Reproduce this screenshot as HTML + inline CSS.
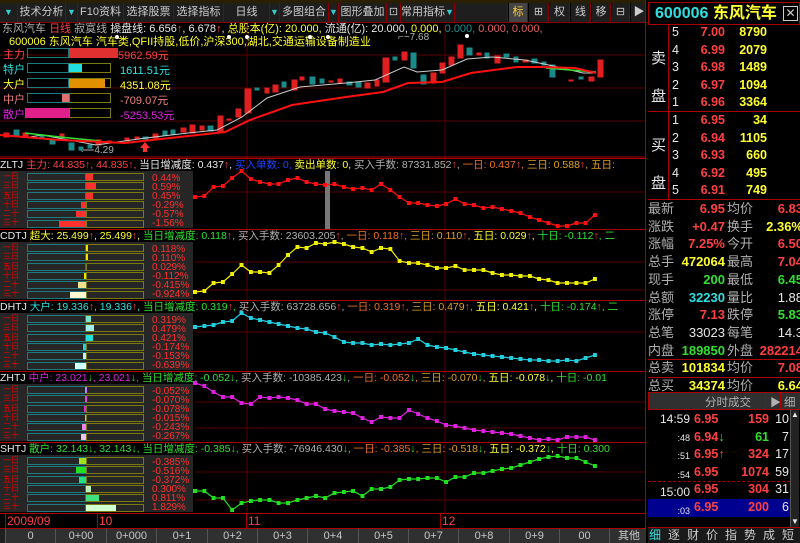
<!DOCTYPE html>
<html><head><meta charset="utf-8"><style>
*{margin:0;padding:0;box-sizing:border-box}
body{width:800px;height:543px;background:#000;overflow:hidden;position:relative;font-family:"Liberation Sans","Noto Sans CJK SC",sans-serif;font-size:11px;color:#c0c0c0}
.a{position:absolute;white-space:nowrap}
.tb{position:absolute;top:3px;height:19px;background:#1e1e1e;border-right:1px solid #800;color:#ccc;font-size:11px;line-height:19px;text-align:center;overflow:hidden;white-space:nowrap}
.tri{color:#3cc;font-size:9px}
.hd{position:absolute;left:0;width:645px;height:12px;line-height:12px;font-size:10.5px;border-top:1px solid #a00;white-space:nowrap;overflow:hidden}
.mini{position:absolute;left:0;width:193px;height:57px;background:#262626}
.bl{position:absolute;left:27px;width:59px;height:8px;border:1px solid #1d7b80}
.br{position:absolute;left:86px;width:58px;height:8px;border:1px solid #7a7a10}
.pc{position:absolute;left:152px;color:#ff3030;font-size:10px;line-height:9px}
.lab{position:absolute;left:3px;width:22px;color:#e00;font-size:8px;line-height:9.3px}
.r{color:#ff4040}.y{color:#ffff30}.g{color:#30e030}.c{color:#30e0e0}.w{color:#e8e8e8}.o{color:#f07020}.gr{color:#b0b0b0}.m{color:#e020e0}
.ob{position:absolute;font-size:12.5px;line-height:17.5px;font-weight:bold}
.st{position:absolute;font-size:13px;line-height:17.7px}
.bt{position:absolute;top:529px;height:14px;background:#303030;border-left:1px solid #555;color:#c8c8c8;font-size:11px;line-height:14px;text-align:center}
</style></head><body>

<!-- toolbar -->
<div class="a" style="left:0;top:0;width:645px;height:3px;background:#2a2000"></div>
<div class="a" style="left:0;top:0;width:645px;height:23px;border-bottom:1px solid #800"></div>
<div class="tb" style="left:0;width:18px"><span class="tri">▼</span></div>
<div class="tb" style="left:18px;width:48px">技术分析</div>
<div class="tb" style="left:66px;width:12px"><span class="tri">▼</span></div>
<div class="tb" style="left:78px;width:46px">F10资料</div>
<div class="tb" style="left:124px;width:50px">选择股票</div>
<div class="tb" style="left:174px;width:50px">选择指标</div>
<div class="tb" style="left:224px;width:46px">日线</div>
<div class="tb" style="left:270px;width:10px"><span class="tri">▼</span></div>
<div class="tb" style="left:280px;width:49px">多图组合</div>
<div class="tb" style="left:329px;width:10px"><span class="tri">▼</span></div>
<div class="tb" style="left:339px;width:48px">图形叠加</div>
<div class="tb" style="left:387px;width:14px">⊡</div>
<div class="tb" style="left:401px;width:54px">常用指标<span class="tri">▼</span></div>
<div class="tb" style="left:455px;width:53px"></div>
<div class="tb" style="left:509px;width:19px;background:#444;color:#ffcc40">标</div>
<div class="tb" style="left:529px;width:20px">⊞</div>
<div class="tb" style="left:550px;width:20px">权</div>
<div class="tb" style="left:571px;width:20px">线</div>
<div class="tb" style="left:592px;width:19px">移</div>
<div class="tb" style="left:612px;width:18px">⊟</div>
<div class="tb" style="left:631px;width:17px">▶</div>

<!-- main chart text -->
<div class="a" style="left:2px;top:23px;font-size:11px;line-height:12px"><span class="gr">东风汽车 </span><span class="r">日线</span><span class="gr"> 寂寞线 </span><span class="w"> 操盘线: 6.656<span class="r">↑</span>, 6.678<span class="r">↑</span>, </span><span class="y">总股本(亿): 20.000, </span><span class="w">流通(亿): 20.000, </span><span class="y">0.000, </span><span style="color:#1a9090">0.000, </span><span style="color:#e06060">0.000, 0.000,</span></div>
<div class="a y" style="left:9px;top:36px;font-size:11px;line-height:12px">600006 东风汽车 汽车类,QFII持股,低价,沪深300,湖北,交通运输设备制造业</div>
<div class="a gr" style="left:398px;top:32px;font-size:10px">⌐~7.68</div>
<div class="a gr" style="left:80px;top:145px;font-size:10px">⟵4.29</div>

<svg class="a" style="left:0;top:0" width="645" height="528">
<defs><marker id="d" markerWidth="4" markerHeight="4" refX="2" refY="2" markerUnits="userSpaceOnUse"><rect width="4" height="4" fill="context-stroke"/></marker></defs>
<g stroke="#5a0000" stroke-width="1">
<line x1="247" y1="24" x2="247" y2="514"/><line x1="445" y1="24" x2="445" y2="514"/>
<line x1="0" y1="55" x2="645" y2="55"/><line x1="0" y1="88" x2="645" y2="88"/><line x1="0" y1="121" x2="645" y2="121"/>
<line x1="195" y1="192" x2="645" y2="192"/><line x1="195" y1="262" x2="645" y2="262"/><line x1="195" y1="290" x2="645" y2="290"/>
<line x1="195" y1="332" x2="645" y2="332"/><line x1="195" y1="402" x2="645" y2="402"/><line x1="195" y1="428" x2="645" y2="428"/>
<line x1="195" y1="472" x2="645" y2="472"/><line x1="195" y1="500" x2="645" y2="500"/>
</g>
<line x1="0" y1="157" x2="645" y2="157" stroke="#a00"/>
<rect x="325" y="171" width="5" height="59" fill="#777"/>
<g fill="#e02020" stroke="#e02020">
<rect x="4" y="133" width="5" height="4"/><rect x="23" y="133" width="5" height="3"/><rect x="60" y="134" width="4" height="2"/><rect x="96" y="140" width="5" height="5"/><rect x="107" y="141" width="4" height="2"/><rect x="125" y="138" width="4" height="3"/><rect x="135" y="137" width="4" height="2"/><rect x="153" y="134" width="5" height="4"/><rect x="181" y="128" width="5" height="4"/><rect x="190" y="125" width="5" height="8"/><rect x="200" y="126" width="4" height="4"/><rect x="218" y="116" width="5" height="16"/><rect x="227" y="119" width="4" height="1"/><rect x="236" y="109" width="5" height="8"/><rect x="245" y="89" width="6" height="24"/><rect x="265" y="88" width="4" height="5"/><rect x="273" y="85" width="5" height="7"/><rect x="292" y="80" width="5" height="10"/><rect x="300" y="77" width="4" height="3"/><rect x="329" y="81" width="4" height="1"/><rect x="338" y="79" width="4" height="4"/><rect x="365" y="83" width="5" height="5"/><rect x="375" y="80" width="4" height="6"/><rect x="383" y="58" width="6" height="24"/><rect x="402" y="52" width="5" height="8"/><rect x="431" y="73" width="5" height="10"/><rect x="440" y="63" width="5" height="10"/><rect x="449" y="57" width="5" height="8"/><rect x="458" y="45" width="5" height="13"/><rect x="477" y="53" width="4" height="2"/><rect x="495" y="56" width="5" height="7"/><rect x="523" y="60" width="5" height="2"/><rect x="569" y="80" width="4" height="1"/><rect x="589" y="77" width="5" height="4"/><rect x="598" y="60" width="5" height="17"/>
</g>
<g fill="#1a8a8a" stroke="#1a8a8a">
<rect x="14" y="130" width="5" height="6"/><rect x="40" y="135" width="4" height="4"/><rect x="50" y="140" width="5" height="4"/><rect x="69" y="143" width="5" height="7"/><rect x="79" y="147" width="4" height="3"/><rect x="88" y="145" width="4" height="3"/><rect x="143" y="137" width="5" height="2"/><rect x="163" y="131" width="4" height="4"/><rect x="171" y="130" width="4" height="4"/><rect x="208" y="126" width="5" height="5"/><rect x="255" y="88" width="4" height="2"/><rect x="282" y="82" width="4" height="5"/><rect x="310" y="77" width="5" height="7"/><rect x="320" y="79" width="4" height="4"/><rect x="347" y="82" width="5" height="3"/><rect x="356" y="82" width="5" height="5"/><rect x="393" y="57" width="4" height="3"/><rect x="411" y="53" width="5" height="15"/><rect x="421" y="75" width="5" height="9"/><rect x="467" y="48" width="5" height="7"/><rect x="485" y="53" width="4" height="5"/><rect x="504" y="54" width="5" height="3"/><rect x="514" y="57" width="4" height="5"/><rect x="532" y="59" width="5" height="4"/><rect x="542" y="62" width="4" height="3"/><rect x="550" y="65" width="5" height="12"/><rect x="579" y="77" width="4" height="2"/>
</g>
<polyline fill="none" stroke="#ccc" stroke-width="1" points="30,137 42,135 96,145 146,138 188,133 217,130 242,117 267,98 300,87 346,83 375,80 404,67 417,72 442,70 467,59 492,57 525,60 558,67 583,73 596,73"/>
<polyline fill="none" stroke="#30e030" stroke-width="1.5" points="25,133 60,137 100,141"/>
<polyline fill="none" stroke="#30e030" stroke-width="1.5" points="546,68 570,70 596,72"/>
<polyline fill="none" stroke="#ff1010" stroke-width="2" points="0,135 60,140 125,143 225,132 250,120 292,105 346,97 383,92 408,83 442,82 471,73 517,67 542,67 575,68 596,73"/>
<path d="M140 148 l5 -6 l5 6 h-3 v4 h-4 v-4z" fill="#ff3030"/>
<g fill="#fff"><circle cx="117" cy="37" r="2"/><circle cx="229" cy="37" r="2"/><circle cx="247" cy="37" r="2"/><circle cx="310" cy="37" r="2"/><circle cx="328" cy="37" r="2"/><circle cx="467" cy="36" r="2"/></g>

<g fill="none" stroke-width="1.2" marker-start="url(#d)" marker-mid="url(#d)" marker-end="url(#d)">
<polyline stroke="#ff1010" points="195,197 204.3,196 213.6,187 222.9,186 232.2,178 241.5,171 250.8,179 260.1,182 269.4,184 278.7,184 288,180 297.3,178 306.6,182 315.9,184 325.2,185 334.5,184 343.8,187 353.1,189 362.4,188 371.7,190 381,184 390.3,190 399.6,197 408.9,203 418.2,203 427.5,205 436.8,206 446.1,204 455.4,199 464.7,204 474,205 483.3,208 492.6,207 501.9,209 511.2,211 520.5,213 529.8,217 539.1,220 548.4,223 557.7,226 567,226 576.3,223 585.6,223 594.9,215"/>
<polyline stroke="#f0f000" points="195,292 204.3,291 213.6,283 222.9,282 232.2,274 241.5,265 250.8,272 260.1,272 269.4,273 278.7,265 288,255 297.3,247 306.6,248 315.9,243 325.2,244 334.5,242 343.8,244 353.1,247 362.4,248 371.7,252 381,248 390.3,249 399.6,261 408.9,263 418.2,263 427.5,265 436.8,268 446.1,268 455.4,266 464.7,270 474,270 483.3,270 492.6,273 501.9,275 511.2,275 520.5,276 529.8,276 539.1,279 548.4,280 557.7,283 567,283 576.3,283 585.6,283 594.9,279"/>
<polyline stroke="#20d0e0" points="195,327 204.3,326 213.6,325 222.9,322 232.2,321 241.5,313 250.8,318 260.1,320 269.4,322 278.7,324 288,326 297.3,328 306.6,329 315.9,332 325.2,333 334.5,337 343.8,342 353.1,343 362.4,343 371.7,345 381,344 390.3,345 399.6,344 408.9,343 418.2,339 427.5,345 436.8,347 446.1,348 455.4,350 464.7,352 474,354 483.3,355 492.6,356 501.9,357 511.2,358 520.5,359 529.8,360 539.1,360 548.4,361 557.7,361 567,360 576.3,361 585.6,358 594.9,355"/>
<polyline stroke="#e020e0" points="195,383 204.3,386 213.6,392 222.9,397 232.2,397 241.5,403 250.8,404 260.1,397 269.4,398 278.7,397 288,398 297.3,400 306.6,404 315.9,404 325.2,409 334.5,411 343.8,412 353.1,413 362.4,418 371.7,422 381,417 390.3,418 399.6,418 408.9,410 418.2,414 427.5,418 436.8,421 446.1,425 455.4,426 464.7,428 474,430 483.3,431 492.6,432 501.9,433 511.2,434 520.5,436 529.8,438 539.1,440 548.4,439 557.7,440 567,437 576.3,437 585.6,437 594.9,440"/>
<polyline stroke="#20e020" points="195,491 204.3,491 213.6,498 222.9,498 232.2,510 241.5,503 250.8,501 260.1,500 269.4,500 278.7,503 288,503 297.3,500 306.6,498 315.9,496 325.2,498 334.5,493 343.8,492 353.1,491 362.4,496 371.7,489 381,489 390.3,487 399.6,480 408.9,479 418.2,479 427.5,478 436.8,478 446.1,482 455.4,477 464.7,477 474,473 483.3,473 492.6,471 501.9,469 511.2,468 520.5,465 529.8,462 539.1,459 548.4,457 557.7,456 567,458 576.3,458 585.6,462 594.9,466"/>
</g>
</svg>

<!-- legend -->
<div class="a r" style="left:3px;top:46px;font-size:11px">主力</div>
<div class="a c" style="left:3px;top:61px;font-size:11px">特户</div>
<div class="a y" style="left:3px;top:76px;font-size:11px">大户</div>
<div class="a" style="left:3px;top:91px;font-size:11px;color:#f08080">中户</div>
<div class="a m" style="left:3px;top:106px;font-size:11px">散户</div>
<div class="a" style="left:27px;top:48px;width:42px;height:10px;border:1px solid #1d7b80"></div><div class="a" style="left:69px;top:48px;width:42px;height:10px;border:1px solid #7a7a10"></div>
<div class="a" style="left:27px;top:63px;width:42px;height:10px;border:1px solid #1d7b80"></div><div class="a" style="left:69px;top:63px;width:42px;height:10px;border:1px solid #7a7a10"></div>
<div class="a" style="left:27px;top:78px;width:42px;height:10px;border:1px solid #1d7b80"></div><div class="a" style="left:69px;top:78px;width:42px;height:10px;border:1px solid #7a7a10"></div>
<div class="a" style="left:27px;top:93px;width:42px;height:10px;border:1px solid #1d7b80"></div><div class="a" style="left:69px;top:93px;width:42px;height:10px;border:1px solid #7a7a10"></div>
<div class="a" style="left:27px;top:108px;width:42px;height:10px;border:1px solid #1d7b80"></div><div class="a" style="left:69px;top:108px;width:42px;height:10px;border:1px solid #7a7a10"></div>
<div class="a" style="left:69px;top:48px;width:49px;height:10px;background:#e03030"></div>
<div class="a" style="left:69px;top:64px;width:13px;height:8px;background:#20e0e0"></div>
<div class="a" style="left:69px;top:79px;width:36px;height:9px;background:#e09000"></div>
<div class="a" style="left:62px;top:94px;width:7px;height:8px;background:#e07070"></div>
<div class="a" style="left:25px;top:108px;width:44px;height:10px;background:#e0208a"></div>
<div class="a r" style="left:118px;top:47px">5962.59元</div>
<div class="a c" style="left:120px;top:62px">1611.51元</div>
<div class="a y" style="left:120px;top:77px">4351.08元</div>
<div class="a" style="left:120px;top:92px;color:#f08080">-709.07元</div>
<div class="a m" style="left:120px;top:107px">-5253.53元</div>

<!-- panel headers -->
<div class="hd" style="top:158px"><span class="w">ZLTJ </span><span class="r">主力: 44.835↑, 44.835↑, </span><span class="w">当日增减度: 0.437<span class="r">↑</span>, </span><span style="color:#2040ff">买入单数: 0, </span><span class="y">卖出单数: 0, </span><span class="gr">买入手数: 87331.852<span class="r">↑</span>, </span><span class="o">一日: 0.437<span class="r">↑</span>, </span><span style="color:#e0a020">三日: 0.588<span class="r">↑</span>, 五日:</span></div>
<div class="hd" style="top:229px"><span class="w">CDTJ </span><span class="y">超大: 25.499<span class="r">↑</span>, 25.499<span class="r">↑</span>, </span><span class="g">当日增减度: 0.118<span class="r">↑</span>, </span><span class="gr">买入手数: 23603.205<span class="r">↑</span>, </span><span class="o">一日: 0.118<span class="r">↑</span>, </span><span style="color:#e0a020">三日: 0.110<span class="r">↑</span>, </span><span class="y">五日: 0.029<span class="r">↑</span>, </span><span class="g">十日: -0.112<span class="r">↑</span>, 二</span></div>
<div class="hd" style="top:300px"><span class="w">DHTJ </span><span class="c">大户: 19.336<span class="r">↑</span>, 19.336<span class="r">↑</span>, </span><span class="g">当日增减度: 0.319<span class="r">↑</span>, </span><span class="gr">买入手数: 63728.656<span class="r">↑</span>, </span><span class="o">一日: 0.319<span class="r">↑</span>, </span><span style="color:#e0a020">三日: 0.479<span class="r">↑</span>, </span><span class="y">五日: 0.421<span class="r">↑</span>, </span><span class="g">十日: -0.174<span class="r">↑</span>, 二</span></div>
<div class="hd" style="top:371px"><span class="w">ZHTJ </span><span class="m">中户: 23.021<span class="g">↓</span>, 23.021<span class="g">↓</span>, </span><span class="g">当日增减度: -0.052↓, </span><span class="gr">买入手数: -10385.423<span class="g">↓</span>, </span><span class="o">一日: -0.052<span class="g">↓</span>, </span><span style="color:#e0a020">三日: -0.070<span class="g">↓</span>, </span><span class="y">五日: -0.078<span class="g">↓</span>, </span><span class="g">十日: -0.01</span></div>
<div class="hd" style="top:442px"><span class="w">SHTJ </span><span class="g">散户: 32.143↓, 32.143↓, 当日增减度: -0.385↓, </span><span class="gr">买入手数: -76946.430<span class="g">↓</span>, </span><span class="o">一日: -0.385<span class="g">↓</span>, </span><span style="color:#e0a020">三日: -0.518<span class="g">↓</span>, </span><span class="y">五日: -0.372<span class="g">↓</span>, </span><span class="g">十日: 0.300</span></div>

<!-- mini panels -->
<div class="mini" style="top:171px"></div><div class="mini" style="top:242px"></div><div class="mini" style="top:313px"></div><div class="mini" style="top:384px"></div><div class="mini" style="top:455px"></div>

<div class="lab" style="top:172px">一日<br>三日<br>五日<br>十日<br>二十<br>三十</div>
<div class="bl" style="top:173px"></div><div class="br" style="top:173px"></div>
<div class="bl" style="top:182px"></div><div class="br" style="top:182px"></div>
<div class="bl" style="top:192px"></div><div class="br" style="top:192px"></div>
<div class="bl" style="top:201px"></div><div class="br" style="top:201px"></div>
<div class="bl" style="top:210px"></div><div class="br" style="top:210px"></div>
<div class="bl" style="top:220px"></div><div class="br" style="top:220px"></div>
<div class="a" style="left:86px;top:174px;width:7px;height:6px;background:#ff3030"></div>
<div class="a" style="left:86px;top:183px;width:10px;height:6px;background:#ff3030"></div>
<div class="a" style="left:86px;top:193px;width:7px;height:6px;background:#ff3030"></div>
<div class="a" style="left:81px;top:202px;width:5px;height:6px;background:#ff3030"></div>
<div class="a" style="left:76px;top:211px;width:10px;height:6px;background:#ff3030"></div>
<div class="a" style="left:59px;top:221px;width:27px;height:6px;background:#ff3030"></div>
<div class="pc" style="top:174px">0.44%<br>0.59%<br>0.45%<br>-0.29%<br>-0.57%<br>-1.56%</div>

<div class="lab" style="top:243px">一日<br>三日<br>五日<br>十日<br>二十<br>三十</div>
<div class="bl" style="top:244px"></div><div class="br" style="top:244px"></div>
<div class="bl" style="top:253px"></div><div class="br" style="top:253px"></div>
<div class="bl" style="top:263px"></div><div class="br" style="top:263px"></div>
<div class="bl" style="top:272px"></div><div class="br" style="top:272px"></div>
<div class="bl" style="top:281px"></div><div class="br" style="top:281px"></div>
<div class="bl" style="top:291px"></div><div class="br" style="top:291px"></div>
<div class="a" style="left:86px;top:245px;width:2px;height:6px;background:#f0e000"></div>
<div class="a" style="left:86px;top:254px;width:2px;height:6px;background:#f0e000"></div>
<div class="a" style="left:84px;top:273px;width:2px;height:6px;background:#f0e000"></div>
<div class="a" style="left:78px;top:282px;width:8px;height:6px;background:#f0e090"></div>
<div class="a" style="left:70px;top:292px;width:16px;height:6px;background:#fff8d0"></div>
<div class="pc" style="top:245px">0.118%<br>0.110%<br>0.029%<br>-0.112%<br>-0.415%<br>-0.924%</div>

<div class="lab" style="top:314px">一日<br>三日<br>五日<br>十日<br>二十<br>三十</div>
<div class="bl" style="top:315px"></div><div class="br" style="top:315px"></div>
<div class="bl" style="top:324px"></div><div class="br" style="top:324px"></div>
<div class="bl" style="top:334px"></div><div class="br" style="top:334px"></div>
<div class="bl" style="top:343px"></div><div class="br" style="top:343px"></div>
<div class="bl" style="top:352px"></div><div class="br" style="top:352px"></div>
<div class="bl" style="top:362px"></div><div class="br" style="top:362px"></div>
<div class="a" style="left:86px;top:316px;width:5px;height:6px;background:#80e0d0"></div>
<div class="a" style="left:86px;top:325px;width:8px;height:6px;background:#a0f0f0"></div>
<div class="a" style="left:86px;top:335px;width:7px;height:6px;background:#20e0e0"></div>
<div class="a" style="left:83px;top:344px;width:3px;height:6px;background:#20d0e0"></div>
<div class="a" style="left:83px;top:353px;width:3px;height:6px;background:#c0f0f0"></div>
<div class="a" style="left:75px;top:363px;width:11px;height:6px;background:#d0ffff"></div>
<div class="pc" style="top:316px">0.319%<br>0.479%<br>0.421%<br>-0.174%<br>-0.153%<br>-0.639%</div>

<div class="lab" style="top:385px">一日<br>三日<br>五日<br>十日<br>二十<br>三十</div>
<div class="bl" style="top:386px"></div><div class="br" style="top:386px"></div>
<div class="bl" style="top:395px"></div><div class="br" style="top:395px"></div>
<div class="bl" style="top:405px"></div><div class="br" style="top:405px"></div>
<div class="bl" style="top:414px"></div><div class="br" style="top:414px"></div>
<div class="bl" style="top:423px"></div><div class="br" style="top:423px"></div>
<div class="bl" style="top:433px"></div><div class="br" style="top:433px"></div>
<div class="a" style="left:85px;top:387px;width:2px;height:6px;background:#c080ff"></div>
<div class="a" style="left:85px;top:396px;width:2px;height:6px;background:#e040e0"></div>
<div class="a" style="left:84px;top:406px;width:2px;height:6px;background:#e020e0"></div>
<div class="a" style="left:85px;top:415px;width:1px;height:6px;background:#e0a0e0"></div>
<div class="a" style="left:82px;top:424px;width:4px;height:6px;background:#f080f0"></div>
<div class="a" style="left:81px;top:434px;width:5px;height:6px;background:#f0c0f0"></div>
<div class="pc" style="top:387px">-0.052%<br>-0.070%<br>-0.078%<br>-0.015%<br>-0.243%<br>-0.267%</div>

<div class="lab" style="top:456px">一日<br>三日<br>五日<br>十日<br>二十<br>三十</div>
<div class="bl" style="top:457px"></div><div class="br" style="top:457px"></div>
<div class="bl" style="top:466px"></div><div class="br" style="top:466px"></div>
<div class="bl" style="top:476px"></div><div class="br" style="top:476px"></div>
<div class="bl" style="top:485px"></div><div class="br" style="top:485px"></div>
<div class="bl" style="top:494px"></div><div class="br" style="top:494px"></div>
<div class="bl" style="top:504px"></div><div class="br" style="top:504px"></div>
<div class="a" style="left:79px;top:458px;width:7px;height:6px;background:#a0e020"></div>
<div class="a" style="left:76px;top:467px;width:10px;height:6px;background:#20e020"></div>
<div class="a" style="left:79px;top:477px;width:7px;height:6px;background:#20e080"></div>
<div class="a" style="left:86px;top:486px;width:5px;height:6px;background:#c0f0c0"></div>
<div class="a" style="left:86px;top:495px;width:13px;height:6px;background:#40e080"></div>
<div class="a" style="left:86px;top:505px;width:30px;height:6px;background:#d0ffd0"></div>
<div class="pc" style="top:458px">-0.385%<br>-0.516%<br>-0.372%<br>0.300%<br>0.811%<br>1.829%</div>

<!-- date axis -->
<div class="a" style="left:0;top:513px;width:645px;height:16px;border-top:1px solid #a00;border-bottom:1px solid #a00"></div>
<div class="a" style="left:5px;top:514px;width:1px;height:14px;background:#a00"></div>
<div class="a" style="left:97px;top:514px;width:1px;height:14px;background:#a00"></div>
<div class="a" style="left:246px;top:514px;width:1px;height:14px;background:#a00"></div>
<div class="a" style="left:440px;top:514px;width:1px;height:14px;background:#a00"></div>
<div class="a r" style="left:7px;top:514px;font-size:12px">2009/09</div>
<div class="a r" style="left:99px;top:514px;font-size:12px">10</div>
<div class="a r" style="left:248px;top:514px;font-size:12px">11</div>
<div class="a r" style="left:442px;top:514px;font-size:12px">12</div>

<!-- bottom tabs -->
<div class="a" style="left:0;top:529px;width:648px;height:14px;background:#202020"></div>
<div class="bt" style="left:5px;width:50px">0</div>
<div class="bt" style="left:55px;width:51px">0+00</div>
<div class="bt" style="left:106px;width:50px">0+000</div>
<div class="bt" style="left:156px;width:51px">0+1</div>
<div class="bt" style="left:207px;width:50px">0+2</div>
<div class="bt" style="left:257px;width:50px">0+3</div>
<div class="bt" style="left:307px;width:51px">0+4</div>
<div class="bt" style="left:358px;width:50px">0+5</div>
<div class="bt" style="left:408px;width:50px">0+7</div>
<div class="bt" style="left:458px;width:51px">0+8</div>
<div class="bt" style="left:509px;width:50px">0+9</div>
<div class="bt" style="left:559px;width:50px">00</div>
<div class="bt" style="left:609px;width:39px">其他</div>

<!-- right panel -->
<div class="a" style="left:645px;top:0;width:3px;height:543px;background:#000;border-left:1px solid #a00"></div>
<div class="a" style="left:648px;top:2px;width:152px;height:23px;border:1px solid #a00"></div>
<div class="a" style="left:655px;top:4px;font-size:16px;font-weight:bold;line-height:20px"><span class="c">600006</span> <span class="y">东风汽车</span></div>
<div class="a" style="left:783px;top:6px;width:15px;height:15px;border:1px solid #ccc;color:#ccc;font-size:12px;line-height:13px;text-align:center;background:#000">✕</div>
<div class="a" style="left:648px;top:25px;width:152px;height:175px;border-bottom:1px solid #a00"></div>
<div class="a" style="left:648px;top:111px;width:152px;height:1px;background:#a00"></div>
<div class="a" style="left:668px;top:25px;width:1px;height:175px;background:#a00"></div>
<div class="a w" style="left:651px;top:40px;font-size:15px;line-height:38px">卖<br>盘</div>
<div class="a w" style="left:651px;top:127px;font-size:15px;line-height:38px">买<br>盘</div>
<div class="ob w" style="left:672px;top:24px;font-weight:normal">5<br>4<br>3<br>2<br>1</div>
<div class="ob r" style="left:690px;top:24px;width:35px;text-align:right">7.00<br>6.99<br>6.98<br>6.97<br>6.96</div>
<div class="ob y" style="left:730px;top:24px;width:37px;text-align:right">8790<br>2079<br>1489<br>1094<br>3364</div>
<div class="ob w" style="left:672px;top:112px;font-weight:normal">1<br>2<br>3<br>4<br>5</div>
<div class="ob r" style="left:690px;top:112px;width:35px;text-align:right">6.95<br>6.94<br>6.93<br>6.92<br>6.91</div>
<div class="ob y" style="left:730px;top:112px;width:37px;text-align:right">34<br>1105<br>660<br>495<br>749</div>

<div class="st gr" style="left:648px;top:200px">最新<br>涨跌<br>涨幅<br>总手<br>现手<br>总额<br>涨停<br>总笔<br>内盘</div>
<div class="st" style="left:676px;top:200px;width:49px;text-align:right;font-weight:bold"><span class="r">6.95</span><br><span class="r">+0.47</span><br><span class="r">7.25%</span><br><span class="y">472064</span><br><span class="g">200</span><br><span class="c">32230</span><br><span class="r">7.13</span><br><span class="w" style="font-weight:normal">33023</span><br><span class="g">189850</span></div>
<div class="st gr" style="left:727px;top:200px">均价<br>换手<br>今开<br>最高<br>最低<br>量比<br>跌停<br>每笔<br>外盘</div>
<div class="st" style="left:753px;top:200px;width:50px;text-align:right;font-weight:bold"><span class="r">6.83</span><br><span class="y">2.36%</span><br><span class="r">6.50</span><br><span class="r">7.04</span><br><span class="g">6.45</span><br><span class="w" style="font-weight:normal">1.88</span><br><span class="g">5.83</span><br><span class="w" style="font-weight:normal">14.3</span><br><span class="r">282214</span></div>
<div class="a" style="left:648px;top:359px;width:152px;height:1px;background:#a00"></div>
<div class="a" style="left:648px;top:377px;width:152px;height:1px;background:#a00"></div>
<div class="st gr" style="left:648px;top:359px">总卖<br>总买</div>
<div class="st y" style="left:676px;top:359px;width:49px;text-align:right;font-weight:bold">101834<br>34374</div>
<div class="st gr" style="left:727px;top:359px">均价<br>均价</div>
<div class="st" style="left:753px;top:359px;width:50px;text-align:right;font-weight:bold"><span class="r">7.08</span><br><span class="y">6.64</span></div>

<div class="a" style="left:648px;top:392px;width:152px;height:18px;background:#303030;border:1px solid #a00"></div>
<div class="a gr" style="left:705px;top:394px;font-size:11.5px">分时成交</div>
<div class="a" style="left:765px;top:393px;width:1px;height:16px;background:#a00"></div>
<div class="a gr" style="left:770px;top:394px">▶</div>
<div class="a" style="left:780px;top:393px;width:1px;height:16px;background:#a00"></div>
<div class="a gr" style="left:784px;top:394px;font-size:11.5px">细</div>
<div class="a" style="left:648px;top:499px;width:142px;height:18px;background:#000090"></div>
<div class="a" style="left:648px;top:481px;width:142px;border-top:1px dashed #a00"></div>
<div class="st w" style="left:648px;top:411px;width:42px;text-align:right;line-height:17.6px;font-size:12px">14:59<br><span style="font-size:9px">:48</span><br><span style="font-size:9px">:51</span><br><span style="font-size:9px">:54</span><br>15:00<br><span style="font-size:9px">:03</span></div>
<div class="st r" style="left:694px;top:411px;line-height:17.6px;font-weight:bold;font-size:12.5px">6.95<br>6.94<span class="g">↓</span><br>6.95↑<br>6.95<br>6.95<br>6.95</div>
<div class="st" style="left:735px;top:411px;width:34px;text-align:right;line-height:17.6px;font-weight:bold;font-size:12.5px"><span class="r">159</span><br><span class="g">61</span><br><span class="r">324</span><br><span class="r">1074</span><br><span class="r">304</span><br><span class="r">200</span></div>
<div class="st w" style="left:770px;top:411px;width:19px;text-align:right;line-height:17.6px;font-size:12.5px">10<br>7<br>17<br>59<br>31<br>6</div>
<div class="a" style="left:790px;top:410px;width:9px;height:117px;background:#222;border-left:1px solid #555"></div>
<div class="a w" style="left:791px;top:410px;font-size:8px">▲</div>
<div class="a w" style="left:791px;top:517px;font-size:8px">▼</div>

<div class="a" style="left:648px;top:527px;width:152px;height:16px;background:#1a1a1a;border-top:1px solid #a00"></div>
<div class="a" style="left:649px;top:528px;font-size:12px;line-height:15px;letter-spacing:7px;color:#ccc"><span class="c">细</span>逐财价指势成短</div>
</body></html>
